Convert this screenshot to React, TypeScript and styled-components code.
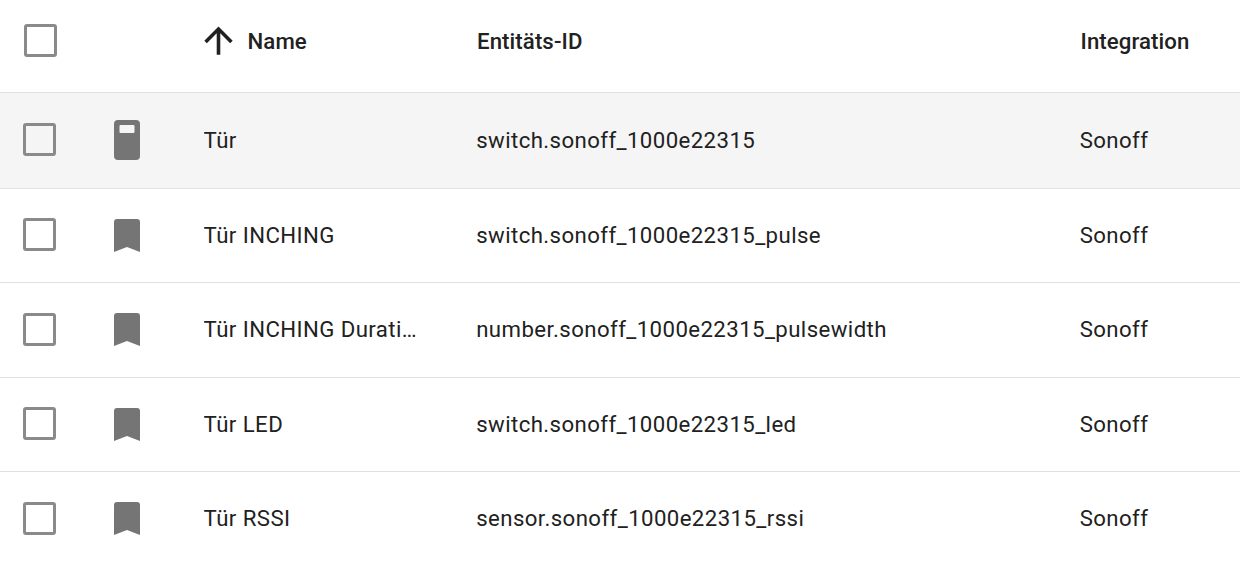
import styled, { createGlobalStyle } from "styled-components";

const GlobalStyle = createGlobalStyle`
  html, body {
    margin: 0;
    padding: 0;
    background: #fff;
    overflow: hidden;
  }
`;

const Table = styled.div`
  width: 1240px;
  height: 569px;
  overflow: hidden;
  font-family: Roboto, "Liberation Sans", sans-serif;
  color: #212121;
  background: #fff;
`;

const HeaderRow = styled.div`
  display: grid;
  grid-template-columns: 180px 273px 603.5px 1fr;
  align-items: center;
  height: 93px;
  box-sizing: border-box;
  padding: 0 0 11px 24px;
  border-bottom: 1px solid #e0e0e0;
`;

const Row = styled.div<{ $hovered?: boolean; $last?: boolean }>`
  display: grid;
  grid-template-columns: 91px 89.6px 272.6px 603.5px 1fr;
  align-items: center;
  height: 94.5px;
  box-sizing: border-box;
  padding: 0 0 2px 23px;
  border-bottom: 1px solid ${(p) => (p.$last ? "transparent" : "#e0e0e0")};
  background: ${(p) => (p.$hovered ? "#f5f5f5" : "#fff")};

  &:nth-child(2) {
    height: 95.9px;
    padding-bottom: 1px;
  }
`;

const Checkbox = styled.div`
  width: 33px;
  height: 33px;
  box-sizing: border-box;
  border: 3.3px solid #8a8a8a;
  border-radius: 3px;
`;

const HeaderCell = styled.div`
  display: flex;
  align-items: center;
  font-size: 22.2px;
  font-weight: 500;
  letter-spacing: 0.1px;
  white-space: nowrap;
`;

const SortIcon = styled.svg`
  width: 43px;
  height: 43px;
  margin: 0 7.5px 0 -7px;
  fill: #212121;
  flex: none;
`;

const Cell = styled.div`
  font-size: 22.2px;
  letter-spacing: 0.42px;
  white-space: nowrap;
`;

const NameCell = styled(Cell)`
  overflow: hidden;
  text-overflow: ellipsis;
  max-width: 214px;
`;

const EntityIcon = styled.svg`
  display: block;
  width: 26px;
  height: 40px;
  fill: #757575;
`;

const SwitchIcon = () => (
  <EntityIcon viewBox="0 0 26 40">
    <path
      fillRule="evenodd"
      d="M4 0H22A4 4 0 0 1 26 4V36A4 4 0 0 1 22 40H4A4 4 0 0 1 0 36V4A4 4 0 0 1 4 0ZM6.5 5A1 1 0 0 0 5.5 6V12A1 1 0 0 0 6.5 13H19.5A1 1 0 0 0 20.5 12V6A1 1 0 0 0 19.5 5Z"
    />
  </EntityIcon>
);

const BookmarkIcon = () => (
  <EntityIcon viewBox="0 0 26 40">
    <path d="M3 4H23A3 3 0 0 1 26 7V37L13 32L0 37V7A3 3 0 0 1 3 4Z" />
  </EntityIcon>
);

const rows = [
  { name: "Tür", id: "switch.sonoff_1000e22315", icon: <SwitchIcon />, hovered: true },
  { name: "Tür INCHING", id: "switch.sonoff_1000e22315_pulse", icon: <BookmarkIcon /> },
  { name: "Tür INCHING Duration", id: "number.sonoff_1000e22315_pulsewidth", icon: <BookmarkIcon /> },
  { name: "Tür LED", id: "switch.sonoff_1000e22315_led", icon: <BookmarkIcon /> },
  { name: "Tür RSSI", id: "sensor.sonoff_1000e22315_rssi", icon: <BookmarkIcon /> },
];

const App = () => (
  <Table>
    <GlobalStyle />
    <HeaderRow>
      <Checkbox />
      <HeaderCell>
        <SortIcon viewBox="0 0 24 24">
          <path d="M13 20H11V8L5.5 13.5L4.08 12.08L12 4.16L19.92 12.08L18.5 13.5L13 8V20Z" />
        </SortIcon>
        Name
      </HeaderCell>
      <HeaderCell>Entitäts-ID</HeaderCell>
      <HeaderCell>Integration</HeaderCell>
    </HeaderRow>
    {rows.map((row, i) => (
      <Row key={row.id} $hovered={row.hovered} $last={i === rows.length - 1}>
        <Checkbox />
        {row.icon}
        <NameCell>{row.name}</NameCell>
        <Cell>{row.id}</Cell>
        <Cell>Sonoff</Cell>
      </Row>
    ))}
  </Table>
);

export default App;
